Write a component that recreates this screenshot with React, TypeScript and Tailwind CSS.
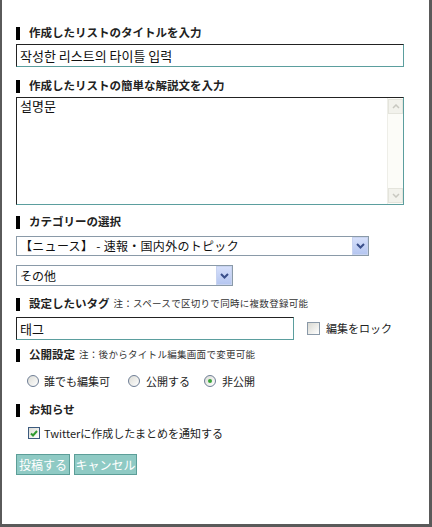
import React from "react";

const jp = { fontFamily: '"Noto Sans CJK JP", "Noto Sans", sans-serif' };
const kr = { fontFamily: '"Noto Sans CJK KR", "Noto Sans", sans-serif' };

function Heading({ text, note, className = "" }: { text: string; note?: string; className?: string }) {
  return (
    <div className={`flex items-center h-[14px] ${className}`}>
      <div className="w-[4px] h-[13px] bg-black" />
      <span className="ml-[9px] text-[11.5px] font-bold text-[#222] leading-none">{text}</span>
      {note && <span className="ml-[4px] text-[9.5px] text-[#333] leading-none tracking-[0.3px]">{note}</span>}
    </div>
  );
}

function Chevron() {
  return (
    <svg width="9" height="6" viewBox="0 0 9 6">
      <path d="M1 1 L4.5 4.5 L8 1" stroke="#3a4f8a" strokeWidth="2" fill="none" />
    </svg>
  );
}

function Select({ text, w, h, className = "", spaced = false }: { text: string; w: string; h: string; className?: string; spaced?: boolean }) {
  return (
    <div className={`${w} ${h} border border-[#8a9aa8] bg-white flex items-center ${className}`}>
      <span className={`flex-1 pl-[3px] text-[12px] text-[#111] leading-none ${spaced ? "tracking-[0.3px]" : ""}`}>{text}</span>
      <div className="w-[16px] h-full border border-[#c8d3f0] bg-gradient-to-b from-[#d6e0fb] to-[#b5c6f0] flex items-center justify-center">
        <Chevron />
      </div>
    </div>
  );
}

function Radio({ checked = false }: { checked?: boolean }) {
  return (
    <div className="w-[12px] h-[12px] rounded-full border border-[#6e7e95] bg-gradient-to-br from-[#dcdcd6] to-white flex items-center justify-center">
      {checked && <div className="w-[4px] h-[4px] rounded-full bg-[#3aa53a]" />}
    </div>
  );
}

export default function App() {
  return (
    <div style={jp} className="w-[432px] h-[527px] bg-white border-l-2 border-r-[3px] border-b-[3px] border-[#5a5a5a] pl-[14px] pt-[26px] flex flex-col">
      <Heading text="作成したリストのタイトルを入力" />
      <div className="mt-[4px] w-[388px] h-[23px] border border-t-[#222] border-l-[#222] border-r-[#5b9e9e] border-b-[#5b9e9e] flex items-center pl-[3px]">
        <span style={kr} className="text-[13px] text-[#111] leading-none">작성한 리스트의 타이틀 입력</span>
      </div>

      <Heading className="mt-[12px]" text="作成したリストの簡単な解説文を入力" />
      <div className="mt-[4px] w-[388px] h-[108px] border border-t-[#222] border-l-[#222] border-r-[#5b9e9e] border-b-[#5b9e9e] flex">
        <div className="flex-1 pl-[3px] pt-[1px] leading-none">
          <span style={kr} className="block text-[13px] text-[#111] leading-[14px]">설명문</span>
        </div>
        <div className="w-[16px] h-full bg-[#fcfcf8] border-l border-[#eeeee8] flex flex-col justify-between items-center py-[1px]">
          <div className="w-[15px] h-[15px] border border-[#e4e4dc] bg-[#f2f2ec] flex items-center justify-center">
            <svg width="8" height="5" viewBox="0 0 8 5"><path d="M1 4 L4 1 L7 4" stroke="#c8c8c0" strokeWidth="1.5" fill="none" /></svg>
          </div>
          <div className="w-[15px] h-[15px] border border-[#e4e4dc] bg-[#f2f2ec] flex items-center justify-center">
            <svg width="8" height="5" viewBox="0 0 8 5"><path d="M1 1 L4 4 L7 1" stroke="#c8c8c0" strokeWidth="1.5" fill="none" /></svg>
          </div>
        </div>
      </div>

      <Heading className="mt-[10px]" text="カテゴリーの選択" />
      <Select className="mt-[7px]" w="w-[353px]" h="h-[20px]" text="【ニュース】 - 速報・国内外のトピック" spaced />
      <Select className="mt-[9px]" w="w-[217px]" h="h-[21px]" text="その他" />

      <Heading className="mt-[11px]" text="設定したいタグ" note="注：スペースで区切りで同時に複数登録可能" />
      <div className="mt-[6px] flex items-center">
        <div className="w-[278px] h-[23px] border border-t-[#222] border-l-[#222] border-r-[#5b9e9e] border-b-[#5b9e9e] flex items-center pl-[3px]">
          <span style={kr} className="text-[13px] text-[#111] leading-none">태그</span>
        </div>
        <div className="ml-[13px] w-[13px] h-[13px] border border-[#8a99a8] bg-gradient-to-br from-[#d9d9d2] to-white" />
        <span className="ml-[6px] text-[11px] text-[#222] leading-none">編集をロック</span>
      </div>

      <Heading className="mt-[8px]" text="公開設定" note="注：後からタイトル編集画面で変更可能" />
      <div className="mt-[12px] ml-[11px] flex items-center h-[14px]">
        <Radio />
        <span className="ml-[5px] text-[11px] text-[#222] leading-none">誰でも編集可</span>
        <div className="ml-[18px]"><Radio /></div>
        <span className="ml-[6px] text-[11px] text-[#222] leading-none">公開する</span>
        <div className="ml-[14px]"><Radio checked /></div>
        <span className="ml-[6px] text-[11px] text-[#222] leading-none">非公開</span>
      </div>

      <Heading className="mt-[15px]" text="お知らせ" />
      <div className="mt-[9px] ml-[12px] flex items-center h-[14px]">
        <div className="w-[12px] h-[12px] border border-[#3c5a7e] bg-gradient-to-br from-[#dcdcd6] to-white flex items-center justify-center">
          <svg width="8" height="7" viewBox="0 0 8 7"><path d="M1 3.5 L3 5.5 L7 1" stroke="#2f9a2f" strokeWidth="2" fill="none" /></svg>
        </div>
        <span className="ml-[4px] text-[11px] text-[#222] leading-none">Twitterに作成したまとめを通知する</span>
      </div>

      <div className="mt-[14px] flex gap-[4px]">
        <div className="w-[54px] h-[21px] bg-[#8fcac4] border border-[#5c9e98] flex items-center justify-center text-white text-[12px] leading-none">投稿する</div>
        <div className="w-[63px] h-[21px] bg-[#8fcac4] border border-[#5c9e98] flex items-center justify-center text-white text-[12px] leading-none">キャンセル</div>
      </div>
    </div>
  );
}
